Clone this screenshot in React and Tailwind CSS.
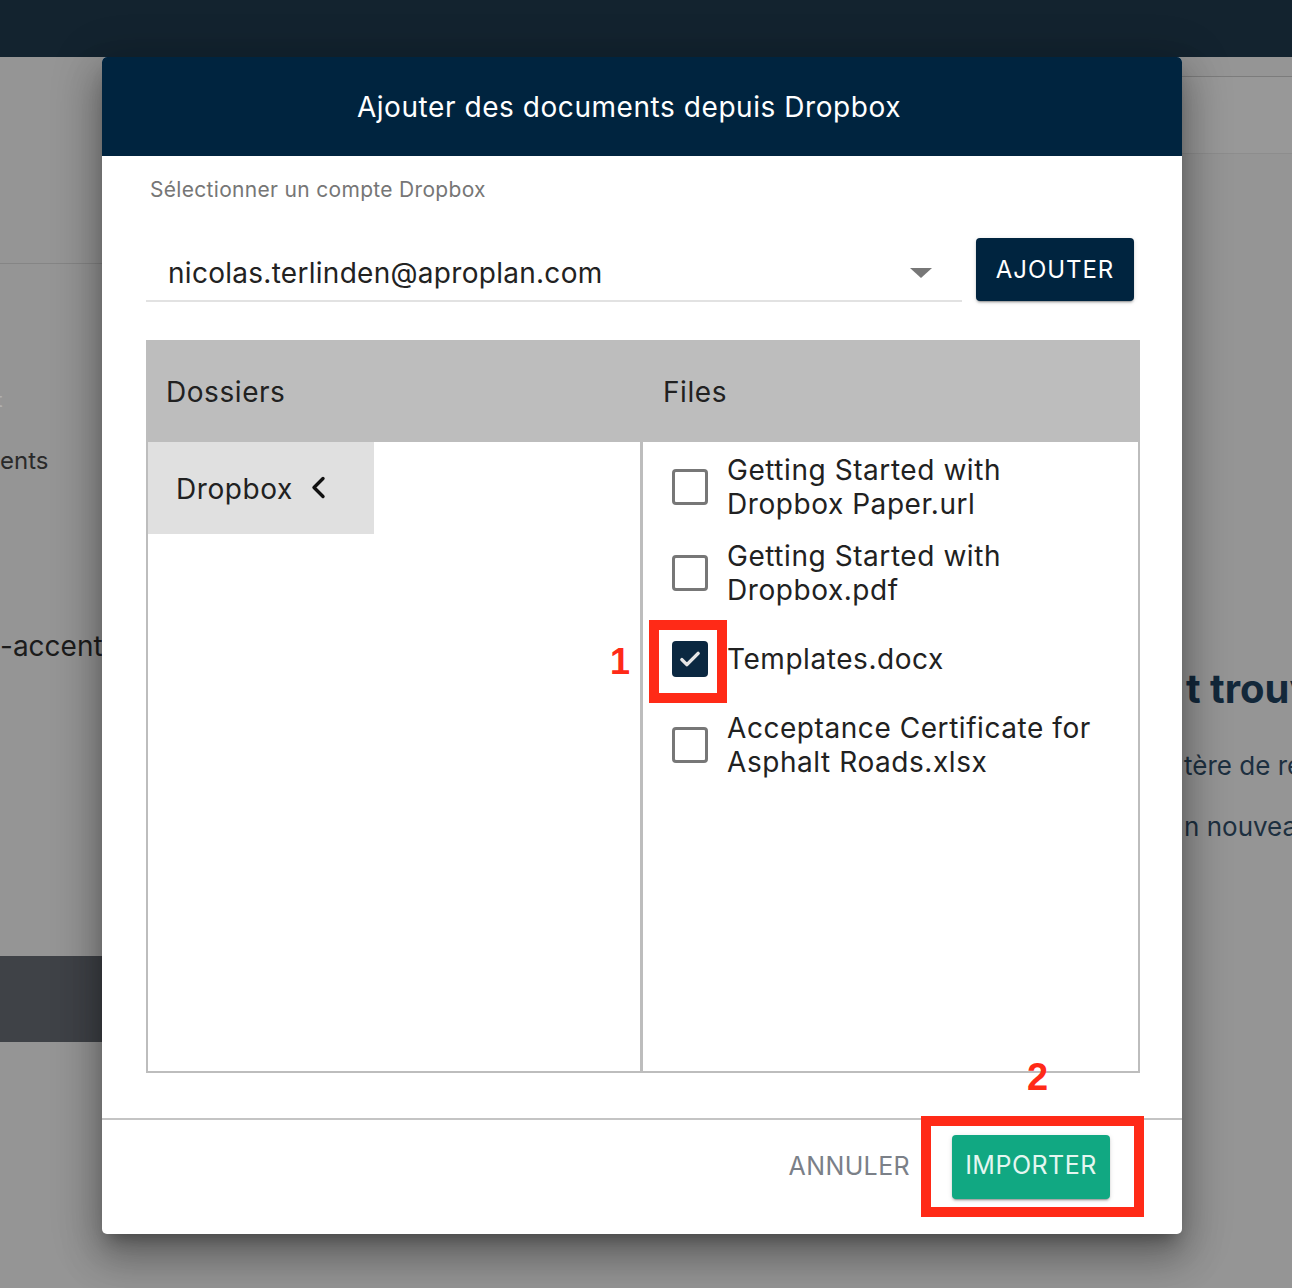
import React from "react";

const files = [
  { name: ["Getting Started with", "Dropbox Paper.url"], checked: false },
  { name: ["Getting Started with", "Dropbox.pdf"], checked: false },
  { name: ["Templates.docx"], checked: true },
  { name: ["Acceptance Certificate for", "Asphalt Roads.xlsx"], checked: false },
];

function Checkbox({ checked }) {
  if (checked) {
    return (
      <div className="flex h-[36px] w-[36px] shrink-0 items-center justify-center rounded-[4px] bg-[#0b2841]">
        <svg width="30" height="30" viewBox="0 0 24 24" fill="none">
          <path d="M5.5 12.5l4 4L18.5 7.5" stroke="#e6e6e6" strokeWidth="2.8" strokeLinecap="round" strokeLinejoin="round" />
        </svg>
      </div>
    );
  }
  return <div className="h-[36px] w-[36px] shrink-0 rounded-[4px] border-[3px] border-[#777777]" />;
}

function Background() {
  return (
    <div className="flex h-[1231px]">
      {/* left part of the page behind the dialog */}
      <div className="w-[102px] overflow-hidden whitespace-nowrap">
        <div className="h-[206px]" />
        <div className="h-px bg-[#858585]" />
        <div className="mt-[124px] -ml-[4px] text-[20px] leading-[24px] text-[#b0b0b0]">t</div>
        <div className="mt-[34px] text-[24px] leading-[30px] text-[#2a2a2a]">ents</div>
        <div className="mt-[152px] text-[28px] leading-[36px] text-[#1c1c1c]">-accent</div>
        <div className="mt-[292px] h-[86px] bg-[#3f4247]" />
      </div>
      <div className="flex-1" />
      {/* right part of the page behind the dialog */}
      <div className="w-[110px] overflow-hidden whitespace-nowrap">
        <div className="h-[20px] border-b border-[#7c7c7c]" />
        <div className="h-[77px] border-b border-[#8d8d8d] bg-[#989898]" />
        <div className="mt-[511px] pl-[4px] text-[40px] font-bold leading-[48px] text-[#13283a]">t trouvé</div>
        <div className="mt-[37px] pl-[2px] text-[26px] leading-[32px] text-[#1d3040]">tère de recherche</div>
        <div className="mt-[29px] pl-[2px] text-[26px] leading-[32px] text-[#1d3040]">n nouveau</div>
      </div>
    </div>
  );
}

function Dialog() {
  return (
    <div className="absolute left-[102px] top-[57px] flex h-[1177px] w-[1080px] flex-col rounded-[5px] bg-white shadow-[0_11px_15px_-7px_rgba(0,0,0,0.3),0_24px_38px_3px_rgba(0,0,0,0.22),0_9px_46px_8px_rgba(0,0,0,0.18)]">
      <div className="flex h-[99px] items-center justify-center rounded-t-[5px] bg-[#00243f] pr-[26px] text-[28px] tracking-[0.02em] text-white">
        Ajouter des documents depuis Dropbox
      </div>

      <div className="flex flex-1 flex-col pl-[44px] pr-[42px]">
        <div className="mt-[22px] pl-[4px] text-[21px] leading-[24px] tracking-[0.015em] text-[#767676]">Sélectionner un compte Dropbox</div>

        <div className="mt-[36px] flex items-end gap-[14px]">
          <div className="flex h-[57px] w-[816px] items-center justify-between border-b-2 border-[#e2e2e2] pl-[22px] pr-[30px]">
            <span className="text-[28px] tracking-[0.01em] text-[#222222]">nicolas.terlinden@aproplan.com</span>
            <svg width="22" height="10" viewBox="0 0 22 10">
              <path d="M0 0h22L11 10z" fill="#777777" />
            </svg>
          </div>
          <button className="mb-[1px] h-[63px] w-[158px] rounded-[4px] bg-[#00243f] text-[24px] tracking-[0.04em] text-white shadow-[0_3px_1px_-2px_rgba(0,0,0,0.2),0_2px_2px_0_rgba(0,0,0,0.14),0_1px_5px_0_rgba(0,0,0,0.12)]">
            AJOUTER
          </button>
        </div>

        <div className="mt-[38px] flex h-[733px] w-[994px] flex-col border-2 border-[#bdbdbd] text-[28px] tracking-[0.02em] text-[#212121]">
          <div className="flex h-[100px] items-center bg-[#bdbdbd]">
            <div className="w-[495px] pl-[18px]">Dossiers</div>
            <div className="pl-[20px]">Files</div>
          </div>
          <div className="flex flex-1">
            <div className="w-[495px] border-r-[3px] border-[#bdbdbd]">
              <div className="flex h-[92px] w-[226px] items-center bg-[#e0e0e0] pb-[2px] pl-[28px]">
                <span className="pt-[4px]">Dropbox</span>
                <svg className="ml-[17px]" width="16" height="23" viewBox="0 0 16 23" fill="none">
                  <path d="M13 2.5L4 11.5l9 9" stroke="#111111" strokeWidth="3.4" strokeLinecap="round" strokeLinejoin="round" />
                </svg>
              </div>
            </div>
            <div className="flex flex-1 flex-col gap-[18px] pt-[11px]">
              {files.map((f) => (
                <div key={f.name.join(" ")} className="flex h-[68px] items-center pl-[29px]">
                  <Checkbox checked={f.checked} />
                  <div className="ml-[19px] leading-[34px]">
                    {f.name.map((line) => (
                      <div key={line}>{line}</div>
                    ))}
                  </div>
                </div>
              ))}
            </div>
          </div>
        </div>
      </div>

      <div className="flex h-[116px] items-start justify-end gap-[42px] border-t-2 border-[#c4c4c4] pr-[72px] pt-[15px]">
        <button className="mt-[13px] text-[25px] tracking-[0.015em] text-[#7b8088]">ANNULER</button>
        <button className="h-[64px] w-[158px] rounded-[4px] bg-[#11a882] pb-[2px] text-[25px] tracking-[0.02em] text-[#e4f6f0] shadow-[0_3px_1px_-2px_rgba(0,0,0,0.2),0_2px_2px_0_rgba(0,0,0,0.14),0_1px_5px_0_rgba(0,0,0,0.12)]">
          IMPORTER
        </button>
      </div>

      {/* annotations */}
      <div className="absolute left-[547px] top-[563px] h-[83px] w-[78px] border-[10px] border-[#ff2a17]" />
      <div className="absolute left-[508px] top-[585px] text-[36px] font-bold leading-[40px] text-[#ff2a17] [font-family:'Liberation_Sans',Arial,sans-serif]">1</div>
      <div className="absolute left-[819px] top-[1059px] h-[101px] w-[223px] border-[10px] border-[#ff2a17]" />
      <div className="absolute left-[925px] top-[998px] text-[38px] font-bold leading-[44px] text-[#ff2a17] [font-family:'Liberation_Sans',Arial,sans-serif]">2</div>
    </div>
  );
}

export default function App() {
  return (
    <div className="relative h-[1288px] w-[1292px] overflow-hidden bg-[#959595] [font-family:Inter,sans-serif]">
      <div className="h-[57px] bg-[#13232f]" />
      <Background />
      <Dialog />
    </div>
  );
}
